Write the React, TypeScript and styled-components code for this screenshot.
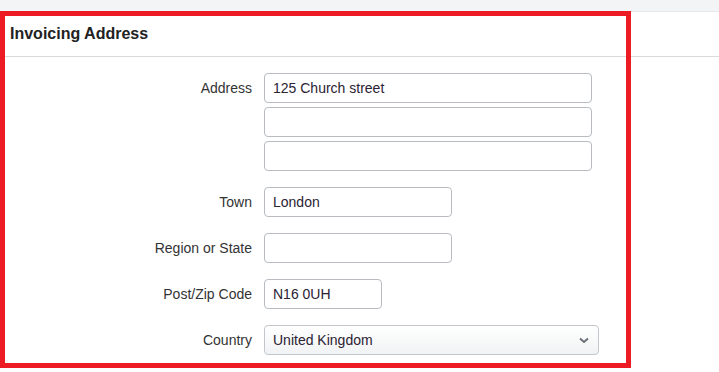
import styled, { createGlobalStyle } from "styled-components"

const GlobalStyle = createGlobalStyle`
  html, body {
    margin: 0;
    padding: 0;
    background: #ffffff;
    font-family: "Liberation Sans", Arial, sans-serif;
    color: #333333;
  }
  * {
    box-sizing: border-box;
  }
`

const Page = styled.div`
  position: relative;
  width: 719px;
  height: 372px;
  overflow: hidden;
`

const TopStrip = styled.div`
  height: 12px;
  background: #f3f4f6;
  border-bottom: 1px solid #e6e8eb;
`

const PanelHeader = styled.div`
  height: 45px;
  padding: 0 10px;
  display: flex;
  align-items: center;
  border-bottom: 1px solid #dadada;
  font-size: 16px;
  font-weight: bold;
  color: #222222;
`

const Form = styled.form`
  display: flex;
  flex-direction: column;
  gap: 16px;
  padding-top: 16px;
`

const Row = styled.div`
  display: grid;
  grid-template-columns: 252px auto;
  column-gap: 12px;
  align-items: start;
`

const Label = styled.label`
  height: 30px;
  line-height: 30px;
  text-align: right;
  font-size: 14px;
  color: #333333;
`

const Stack = styled.div`
  display: flex;
  flex-direction: column;
  gap: 4px;
`

const Input = styled.input<{ $width: number }>`
  width: ${(p) => p.$width}px;
  height: 30px;
  padding: 0 8px;
  border: 1px solid #b8bcc1;
  border-radius: 4px;
  font-family: "Liberation Sans", Arial, sans-serif;
  font-size: 14px;
  color: #2b2233;
  background: #ffffff;
  outline: none;
`

const SelectBox = styled.div`
  position: relative;
  width: 335px;
  height: 30px;
  border: 1px solid #c3c7cc;
  border-radius: 4px;
  background: linear-gradient(#ffffff, #f1f2f3);
  display: flex;
  align-items: center;
  padding: 0 8px;
  font-size: 14px;
  color: #2b2233;
`

const Chevron = styled.svg`
  position: absolute;
  right: 9px;
  top: 11px;
`

const Highlight = styled.div`
  position: absolute;
  left: 0;
  top: 11px;
  width: 631px;
  height: 357px;
  border: 5px solid #ed1c24;
  pointer-events: none;
`

const App = () => {
  return (
    <Page>
      <GlobalStyle />
      <TopStrip />
      <PanelHeader>Invoicing Address</PanelHeader>
      <Form onSubmit={(e) => e.preventDefault()}>
        <Row>
          <Label>Address</Label>
          <Stack>
            <Input $width={328} defaultValue="125 Church street" />
            <Input $width={328} defaultValue="" />
            <Input $width={328} defaultValue="" />
          </Stack>
        </Row>
        <Row>
          <Label>Town</Label>
          <Input $width={188} defaultValue="London" />
        </Row>
        <Row>
          <Label>Region or State</Label>
          <Input $width={188} defaultValue="" />
        </Row>
        <Row>
          <Label>Post/Zip Code</Label>
          <Input $width={118} defaultValue="N16 0UH" />
        </Row>
        <Row>
          <Label>Country</Label>
          <SelectBox>
            United Kingdom
            <Chevron width="10" height="7" viewBox="0 0 10 7">
              <polyline points="1,1.5 5,5 9,1.5" fill="none" stroke="#6b7178" strokeWidth="2" />
            </Chevron>
          </SelectBox>
        </Row>
      </Form>
      <Highlight />
    </Page>
  )
}

export default App
